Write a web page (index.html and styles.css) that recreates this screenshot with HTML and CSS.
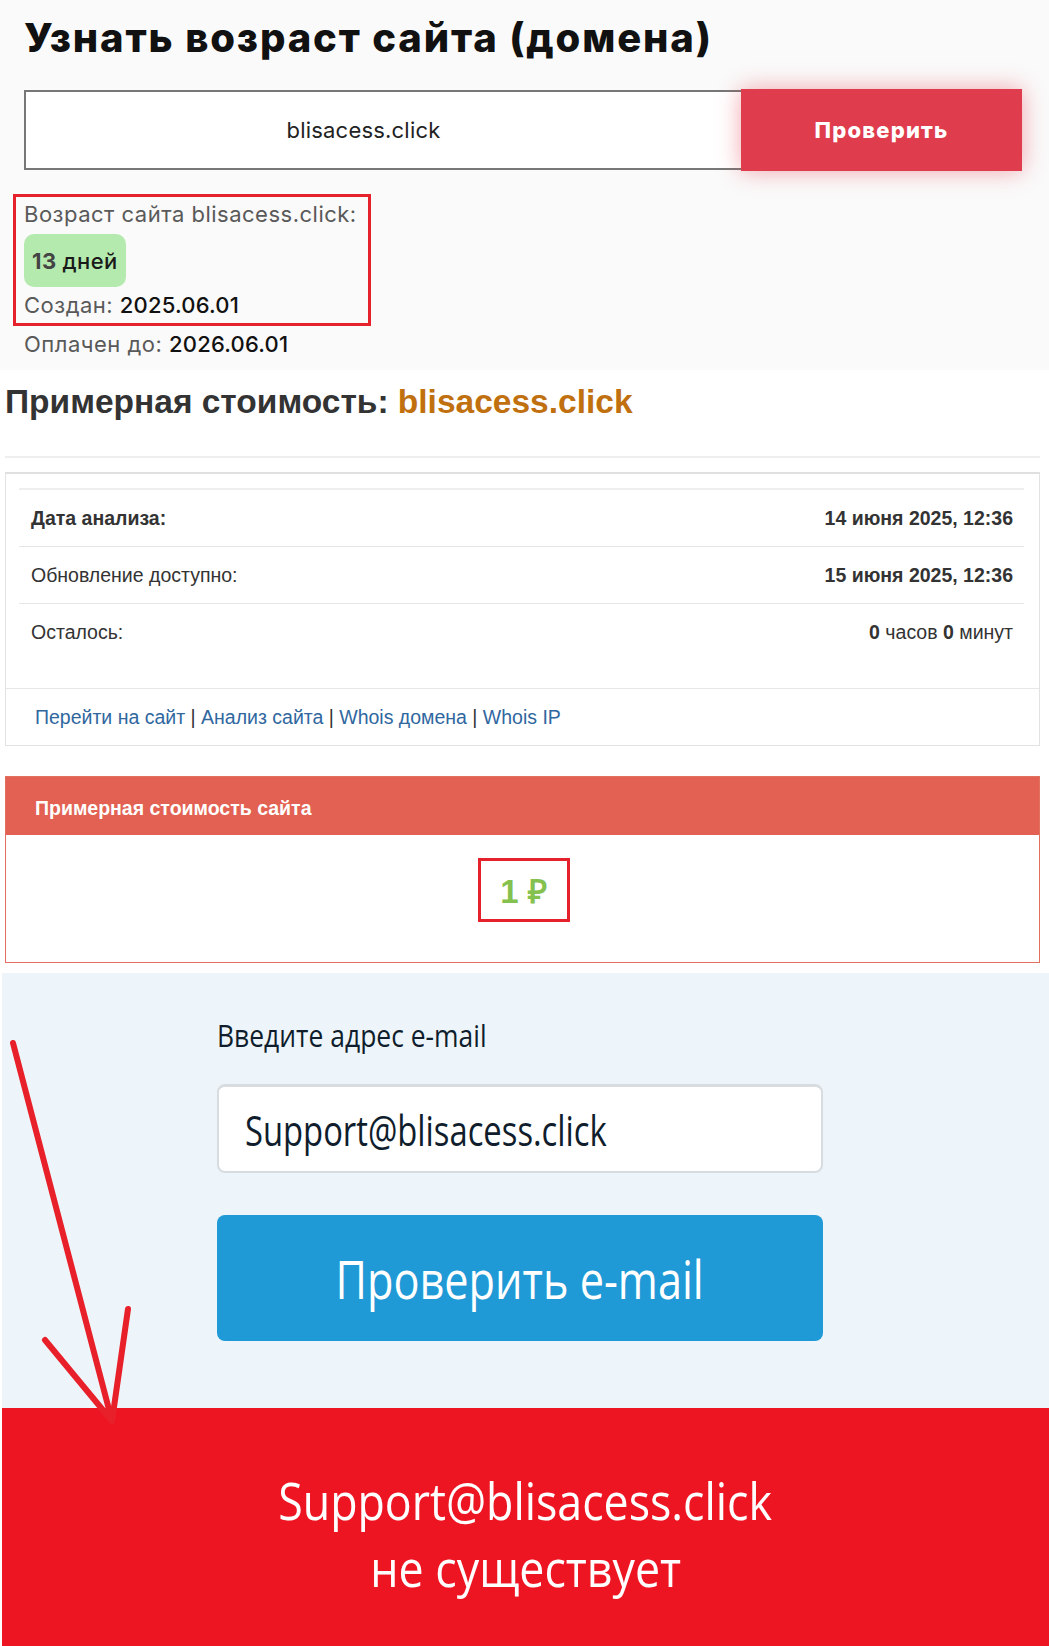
FILE: index.html
```html
<!DOCTYPE html>
<html lang="ru">
<head>
<meta charset="utf-8">
<title>Узнать возраст сайта</title>
<link rel="stylesheet" href="styles.css">
</head>
<body>
<section class="age">
  <h1 class="age-title">Узнать возраст сайта (домена)</h1>
  <div class="age-form">
    <div class="age-input">blisacess.click</div>
    <button class="age-btn" type="button">Проверить</button>
  </div>
  <div class="age-mark">
    <div class="age-line">Возраст сайта blisacess.click:</div>
    <div class="age-badge"><b>13</b> дней</div>
    <div class="age-line">Создан: <span class="age-val">2025.06.01</span></div>
  </div>
  <div class="age-line age-paid">Оплачен до: <span class="age-val">2026.06.01</span></div>
</section>

<section class="cost">
  <h2 class="cost-title">Примерная стоимость: <span class="cost-domain">blisacess.click</span></h2>
  <div class="cost-rule"></div>
  <div class="panel">
    <div class="panel-body">
      <div class="row row-first"><span class="row-label row-strong">Дата анализа:</span><span class="row-val">14 июня 2025, 12:36</span></div>
      <div class="row"><span class="row-label">Обновление доступно:</span><span class="row-val">15 июня 2025, 12:36</span></div>
      <div class="row row-last"><span class="row-label">Осталось:</span><span class="row-rest"><b>0</b> часов <b>0</b> минут</span></div>
    </div>
    <div class="panel-foot">
      <a class="link" href="#">Перейти на сайт</a> | <a class="link" href="#">Анализ сайта</a> | <a class="link" href="#">Whois домена</a> | <a class="link" href="#">Whois IP</a>
    </div>
  </div>
  <div class="price">
    <div class="price-head">Примерная стоимость сайта</div>
    <div class="price-body">
      <div class="price-box">1 ₽</div>
    </div>
  </div>
</section>

<section class="email">
  <div class="email-col">
    <div class="email-label"><span class="narrow narrow-label">Введите адрес e-mail</span></div>
    <div class="email-input"><span class="narrow narrow-input">Support@blisacess.click</span></div>
    <button class="email-btn" type="button"><span class="narrow narrow-btn">Проверить e-mail</span></button>
  </div>
  <svg class="arrow" width="140" height="460" viewBox="0 0 140 460">
    <path d="M11 70 L110 448" />
    <path d="M43 367 L110 448" />
    <path d="M126 336 L110 448" />
  </svg>
</section>

<section class="result">
  <div class="result-line"><span class="narrow narrow-result">Support@blisacess.click</span></div>
  <div class="result-line"><span class="narrow narrow-result">не существует</span></div>
</section>
</body>
</html>
```

FILE: styles.css
```css
* { box-sizing: border-box; }
html, body { margin: 0; padding: 0; }
body {
  width: 1049px;
  background: #ffffff;
  font-family: "Liberation Sans", Arial, sans-serif;
}

/* ---------- age section ---------- */
.age {
  background: #fafafa;
  padding: 12px 27px 8px 24px;
  font-family: Inter, "Open Sans", sans-serif;
}
.age-title {
  margin: 0;
  font-size: 40px;
  line-height: 52px;
  font-weight: 800;
  color: #111;
  letter-spacing: 1.85px;
}
.age-form {
  display: flex;
  align-items: center;
  margin-top: 25px;
  height: 81px;
}
.age-input {
  width: 717px;
  height: 80px;
  border: 2px solid #777;
  border-right: none;
  background: #fff;
  display: flex;
  align-items: center;
  justify-content: center;
  padding-right: 40px;
  font-size: 22px;
  letter-spacing: 0.2px;
  color: #222;
}
.age-btn {
  width: 281px;
  height: 82px;
  border: none;
  background: #df3c4d;
  color: #fff;
  font-family: inherit;
  font-size: 22px;
  font-weight: 800;
  letter-spacing: 1.2px;
  box-shadow: 0 0 22px rgba(230, 60, 75, 0.45);
}
.age-mark {
  margin: 24px 0 0 -11px;
  width: 358px;
  border: 3px solid #e5212b;
  padding-left: 8px;
}
.age-line {
  font-size: 22px;
  line-height: 35px;
  letter-spacing: 0.5px;
  color: #595959;
  white-space: nowrap;
}
.age-paid { line-height: 36px; }
.age-val { color: #111; font-weight: 500; letter-spacing: 0.2px; }
.age-badge {
  display: inline-flex;
  align-items: center;
  height: 53px;
  margin: 2px 0 1px;
  padding: 0 8px;
  border-radius: 10px;
  background: #b5eaae;
  font-size: 22px;
  letter-spacing: 0.4px;
  color: #1a1a1a;
  font-weight: 500;
}
.age-badge b { color: #444; font-weight: 700; margin-right: 6px; }

/* ---------- cost section ---------- */
.cost {
  background: #fff;
  padding: 12px 9px 10px 5px;
}
.cost-title {
  margin: 0;
  font-size: 33.5px;
  line-height: 40px;
  font-weight: 700;
  color: #333;
}
.cost-domain { color: #c0700e; }
.cost-rule {
  margin-top: 34px;
  height: 2px;
  background: #eeeeee;
}
.panel {
  margin-top: 14px;
  border: 1px solid #e2e2e2;
  border-top: 2px solid #e0e0e0;
}
.panel-body {
  padding: 14px 15px 28px 13px;
}
.row {
  display: flex;
  justify-content: space-between;
  align-items: center;
  height: 57px;
  padding: 0 11px 0 12px;
  border-top: 1px solid #e6e6e6;
  font-size: 19.5px;
  color: #333;
}
.row-first { border-top: 2px solid #eeeeee; height: 58px; }
.row-strong { font-weight: 700; }
.row-val { font-weight: 700; }
.panel-foot {
  border-top: 1px solid #e6e6e6;
  height: 57px;
  display: flex;
  align-items: center;
  padding: 0 29px;
  font-size: 19.5px;
  color: #333;
  white-space: pre;
}
.link { color: #30679f; text-decoration: none; }

.price {
  margin-top: 30px;
  border: 1px solid #e2705f;
}
.price-head {
  background: #e26152;
  height: 58px;
  display: flex;
  align-items: center;
  padding: 4px 29px 0;
  color: #fff;
  font-weight: 700;
  font-size: 19.5px;
}
.price-body {
  display: flex;
  justify-content: center;
  padding: 23px 0 40px 2px;
}
.price-box {
  width: 92px;
  height: 64px;
  border: 3px solid #e5212b;
  display: flex;
  align-items: center;
  justify-content: center;
  color: #85c14e;
  font-weight: 700;
  font-size: 33px;
}

/* ---------- email section ---------- */
.narrow {
  display: inline-block;
  white-space: nowrap;
}
.email {
  position: relative;
  margin-left: 2px;
  height: 435px;
  background: #eef5fa;
  padding: 42px 0 0 215px;
  font-family: "Open Sans", "DejaVu Sans", sans-serif;
}
.email-col { width: 606px; }
.email-label {
  font-size: 31px;
  line-height: 40px;
  color: #0f1d2c;
}
.narrow-label { transform: scaleX(0.853); transform-origin: left center; }
.email-input {
  margin-top: 29px;
  height: 89px;
  background: #fff;
  border: 2px solid #d6dcdf;
  border-top-width: 3px;
  border-radius: 8px;
  display: flex;
  align-items: center;
  padding-left: 26px;
  font-size: 42px;
  color: #0f1d2c;
}
.narrow-input { transform: scaleX(0.78); transform-origin: left center; }
.email-btn {
  display: block;
  margin-top: 42px;
  width: 606px;
  height: 126px;
  border: none;
  border-radius: 8px;
  background: #1f9ad6;
  color: #fff;
  font-family: inherit;
  font-size: 53px;
}
.narrow-btn { transform: scaleX(0.816); transform-origin: center; }
.arrow {
  position: absolute;
  left: 0;
  top: 0;
  overflow: visible;
  z-index: 2;
}
.arrow path {
  fill: none;
  stroke: #e8202a;
  stroke-width: 6;
  stroke-linecap: round;
}

/* ---------- result section ---------- */
.result {
  margin-left: 2px;
  height: 239px;
  background: #ee1522;
  padding-top: 58px;
  text-align: center;
  color: #fff;
  font-family: "Open Sans", "DejaVu Sans", sans-serif;
  font-size: 52px;
  line-height: 67px;
}
.narrow-result { transform: scaleX(0.86); transform-origin: center; }
```
